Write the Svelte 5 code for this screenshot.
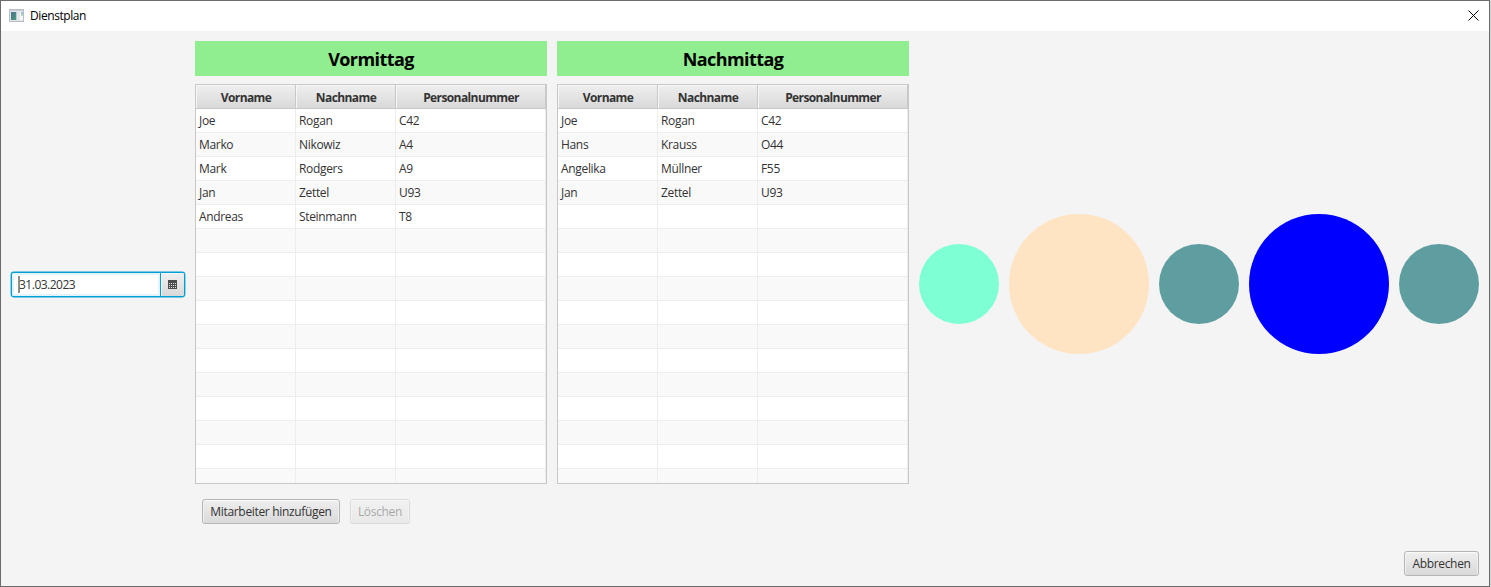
<script>
  const shifts = [
    {
      title: 'Vormittag',
      people: [
        ['Joe', 'Rogan', 'C42'],
        ['Marko', 'Nikowiz', 'A4'],
        ['Mark', 'Rodgers', 'A9'],
        ['Jan', 'Zettel', 'U93'],
        ['Andreas', 'Steinmann', 'T8']
      ]
    },
    {
      title: 'Nachmittag',
      people: [
        ['Joe', 'Rogan', 'C42'],
        ['Hans', 'Krauss', 'O44'],
        ['Angelika', 'Müllner', 'F55'],
        ['Jan', 'Zettel', 'U93']
      ]
    }
  ];
  const columns = ['Vorname', 'Nachname', 'Personalnummer'];
  const rows = Array.from({ length: 16 }, (_, i) => i);
  const circles = [
    ['small', 'aquamarine'],
    ['large', 'bisque'],
    ['small', 'cadetblue'],
    ['large', 'blue'],
    ['small', 'cadetblue']
  ];
</script>

<div class="window">
  <header>
    <svg class="app" width="15" height="13" viewBox="0 0 15 13" shape-rendering="crispEdges">
      <defs>
        <linearGradient id="pane" x1="0" y1="0" x2="1" y2="1">
          <stop offset="0" stop-color="#4a7190" />
          <stop offset="1" stop-color="#4c9a78" />
        </linearGradient>
      </defs>
      <path fill="#b8bec3" d="M0 0h15v13H0z" />
      <path fill="#e3e7ea" d="M1 1h13v11H1z" />
      <path fill="#c9cfd4" d="M1 1h13v1H1z" />
      <path fill="url(#pane)" d="M2 3h5v8H2z" />
      <path fill="#b9cdd4" d="M7 3h1v8H7z" />
      <path fill="#f8f8f8" d="M11 3h3v8h-3z" />
      <path fill="#a5bfd6" d="M12 3h2v2h-2z" />
      <path fill="#b5d9bc" d="M12 5h2v2h-2z" />
    </svg>
    <span class="caption">Dienstplan</span>
    <svg class="close" width="11" height="11" viewBox="0 0 11 11">
      <path d="M.5.5l10 10M10.5.5l-10 10" stroke="#000" stroke-width="1" fill="none" />
    </svg>
  </header>

  <main>
    <div class="date">
      <div class="field"><i></i><span>31.03.2023</span></div>
      <div class="pick">
        <svg width="9" height="9" viewBox="0 0 9 9" shape-rendering="crispEdges">
          <path fill="#4d4d4d" d="M0 0h9v9H0z" />
          <path stroke="#ddd" stroke-dasharray="1 1" d="M1 3.5h7M1 5.5h7M1 7.5h7" />
        </svg>
      </div>
    </div>

    <section class="plan">
      <div class="shifts">
        {#each shifts as shift}
          <div class="shift">
            <h2><span>{shift.title}</span></h2>
            <div class="table">
              <div class="row head">
                {#each columns as column}<div><span>{column}</span></div>{/each}
              </div>
              {#each rows as r}
                <div class="row body">
                  {#each columns as _, c}<div>{shift.people[r]?.[c] ?? ''}</div>{/each}
                </div>
              {/each}
            </div>
          </div>
        {/each}
      </div>
      <div class="actions">
        <button class="add"><span>Mitarbeiter hinzufügen</span></button>
        <button class="del" disabled><span>Löschen</span></button>
      </div>
    </section>

    <div class="circles">
      {#each circles as [size, color]}
        <div class="{size} {color}"></div>
      {/each}
    </div>
  </main>

  <footer><button class="cancel"><span>Abbrechen</span></button></footer>
</div>

<style>
  :global(body) { background: #d4d4d4; overflow: hidden; }
  * { box-sizing: border-box; }
  .window {
    width: 1490px; height: 587px; border: 1px solid #6b6b6b;
    background: #f4f4f4; color: #333;
    font: 12px/16px "Open Sans", "Noto Sans", sans-serif;
    letter-spacing: -0.33px;
    display: flex; flex-direction: column;
    white-space: nowrap;
  }
  header {
    height: 30px; flex: none; background: #fff; color: #000;
    display: flex; align-items: center; padding: 0 10px 2px 8px;
  }
  .app { margin-right: 6px; }
  .caption { letter-spacing: -0.42px; padding-top: 2px; }
  .close { margin-left: auto; }
  main { display: flex; gap: 10px; padding: 10px 10px 0; height: 496px; flex: none; align-items: center; }
  .date {
    width: 174px; height: 25px; border: 1px solid #039ed3; border-radius: 3px;
    display: flex; background: #fff; flex: none;
    box-shadow: 0 0 0 .4px #039ed3;
  }
  .field {
    flex: 1; display: flex; align-items: center;
    border: 2px solid #e3f3f9; padding-left: 4px; letter-spacing: -0.5px; border-radius: 2px 0 0 2px;
  }
  .field i { width: 2px; height: 17px; background: #8f8f8f; margin-right: -1px; }
  .field span { padding-top: 2px; }
  .pick {
    width: 24px; border-left: 1px solid #039ed3; border-radius: 0 2px 2px 0;
    background: linear-gradient(#efefef, #d9d9d9); display: flex; align-items: center; justify-content: center;
    box-shadow: inset 1px 1px #f5f5f5;
  }
  .plan { align-self: flex-start; flex: none; }
  .shifts { display: flex; gap: 10px; }
  .shift { width: 352px; }
  h2 {
    margin: 0 0 8px; height: 35px; background: lightgreen; color: #000;
    font-size: 18px; line-height: 37px; font-weight: 700; text-align: center; letter-spacing: -0.58px;
  }
  .table { height: 400px; border: 1px solid #c8c8c8; overflow: hidden; background: #fff; }
  .row { display: grid; grid-template: 24px / 100px 100px 150px; }
  .head { color: #333; font-weight: 700; text-align: center; letter-spacing: -0.6px; }
  .head div {
    background: linear-gradient(#efefef, #d9d9d9); border-right: 1px solid #c8c8c8; border-bottom: 1px solid #c8c8c8;
    box-shadow: inset 1px 1px #f7f7f7; line-height: 25px; padding-left: 1px;
  }
  .body div { border-right: 1px solid #ededed; border-bottom: 1px solid #ededed; padding-left: 3px; line-height: 24px; }
  .body:nth-child(odd) { background: #f9f9f9; }
  .actions { display: flex; gap: 10px; padding: 15px 0 0 7px; }
  button {
    height: 25px; padding: 0; font: inherit; letter-spacing: inherit; color: #333;
    border: 1px solid #b5b5b5; border-radius: 3px;
    background: linear-gradient(#efefef, #d9d9d9); box-shadow: inset 0 1px #fafafa, inset 1px 0 #f0f0f0, inset -1px 0 #f0f0f0;
  }
  .add { width: 138px; }
  .del { width: 60px; opacity: .4; }
  .cancel { width: 75px; }
  .circles { display: flex; gap: 10px; align-items: center; }
  .circles div { border-radius: 50%; }
  .small { width: 80px; height: 80px; }
  .large { width: 140px; height: 140px; }
  .aquamarine { background: aquamarine; }
  .bisque { background: bisque; }
  .cadetblue { background: cadetblue; }
  .blue { background: blue; }
  footer { display: flex; justify-content: flex-end; padding: 24px 10px 0; }
</style>
